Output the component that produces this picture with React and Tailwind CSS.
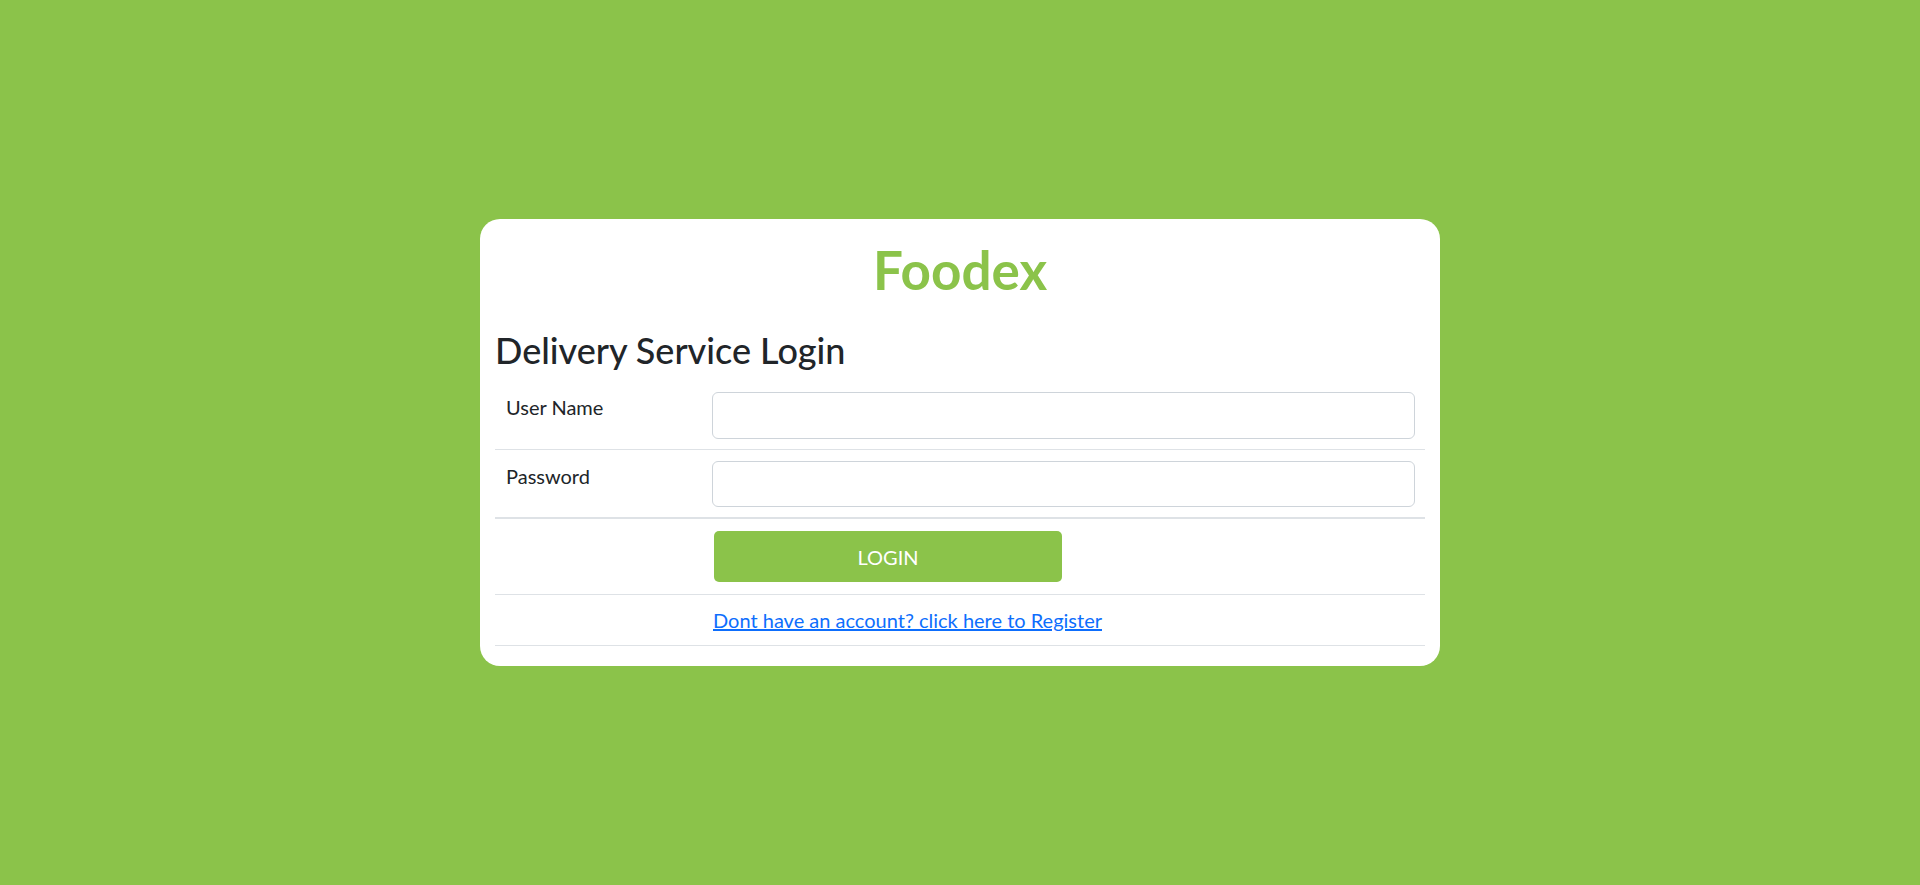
export default function App() {
  return (
    <div
      className="min-h-[885px] w-full bg-[#8bc34a] flex items-center justify-center"
      style={{ fontFamily: "Lato, 'Noto Sans', sans-serif" }}
    >
      <div className="w-[960px] h-[447px] bg-white rounded-[20px] px-[15px] pt-[20px] pb-[20px] text-[#212529]">
        <h1 className="text-center text-[53px] leading-[61px] font-bold text-[#8bc34a]">Foodex</h1>
        <h2 className="mt-[29px] mb-[10px] text-[36px] leading-[43px] font-medium">Delivery Service Login</h2>
        <div className="text-[20px] leading-[30px]">
          <div className="grid grid-cols-[207px_1fr] border-b border-[#dee2e6]">
            <div className="pl-[11px] pt-[10px]">User Name</div>
            <div className="px-[10px] pt-[10px] pb-[10px]">
              <input
                type="text"
                className="block w-full h-[47px] rounded-[6px] border border-[#ced4da] bg-white outline-none"
              />
            </div>
          </div>
          <div className="grid grid-cols-[207px_1fr] border-b-2 border-[#dee2e6]">
            <div className="pl-[11px] pt-[11px]">Password</div>
            <div className="px-[10px] pt-[11px] pb-[10px]">
              <input
                type="password"
                className="block w-full h-[46px] rounded-[6px] border border-[#ced4da] bg-white outline-none"
              />
            </div>
          </div>
          <div className="grid grid-cols-[207px_1fr] border-b border-[#dee2e6]">
            <div></div>
            <div className="pl-[12px] pt-[12px] pb-[12px]">
              <button className="w-[348px] h-[51px] rounded-[5px] bg-[#8bc34a] text-white text-[20px]">LOGIN</button>
            </div>
          </div>
          <div className="grid grid-cols-[207px_1fr] border-b border-[#dee2e6]">
            <div></div>
            <div className="pl-[11px] pt-[10px] pb-[10px]">
              <a href="#" className="text-[#0d6efd] underline">Dont have an account? click here to Register</a>
            </div>
          </div>
        </div>
      </div>
    </div>
  );
}
